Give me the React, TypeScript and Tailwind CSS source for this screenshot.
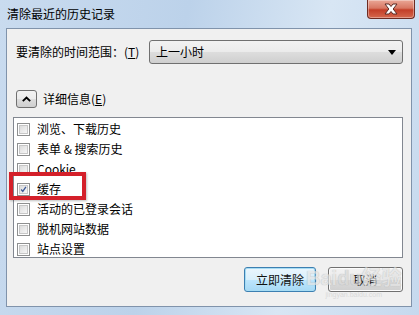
import React from "react";

const FONT = { fontFamily: '"Noto Sans CJK SC", "Noto Sans", sans-serif' };

const ITEMS = [
  { label: "浏览、下载历史", checked: false },
  { label: "表单 & 搜索历史", checked: false },
  { label: "Cookie", checked: false },
  { label: "缓存", checked: true },
  { label: "活动的已登录会话", checked: false },
  { label: "脱机网站数据", checked: false },
  { label: "站点设置", checked: false },
];

function CheckBox({ checked }: { checked: boolean }) {
  return (
    <div className="w-[13px] h-[13px] border border-[#8e8f8f] bg-white p-[1px] shrink-0">
      <div className="w-full h-full bg-[linear-gradient(135deg,#dcdcdc,#f6f6f6)] border border-[#c7c7c7] flex items-center justify-center">
        {checked && (
          <svg width="9" height="9" viewBox="0 0 9 9">
            <path d="M1.5 4.5 L3.6 7 L7.6 1.2" fill="none" stroke="#3d5a98" strokeWidth="1.7" />
          </svg>
        )}
      </div>
    </div>
  );
}

function WinButton({ label, focused }: { label: string; focused?: boolean }) {
  return (
    <div
      className={`h-[25px] rounded-[3px] border flex items-center justify-center text-[12px] text-[#111] ${
        focused
          ? "w-[72px] border-[#3c7fb1] shadow-[inset_0_0_0_1px_#a6dcf4] bg-[linear-gradient(#eaf6fd_0%,#d9f0fc_50%,#bee6fd_51%,#a7d9f5_100%)]"
          : "w-[75px] border-[#707070] shadow-[inset_0_0_0_1px_#fcfcfc] bg-[linear-gradient(#f2f2f2_0%,#ebebeb_50%,#dddddd_51%,#cfcfcf_100%)]"
      }`}
    >
      {label}
    </div>
  );
}

export default function App() {
  return (
    <div
      className="relative w-[419px] h-[315px] overflow-hidden bg-[linear-gradient(100deg,#c9dbef_0%,#bcd2ea_40%,#d8e6f4_70%,#c6d9ee_100%)] flex flex-col"
      style={FONT}
    >
      {/* Title bar */}
      <div className="h-[28px] flex items-center pl-[7px] shrink-0">
        <span className="text-[12px] text-black">清除最近的历史记录</span>
      </div>

      {/* Close button */}
      <div className="absolute left-[367px] top-0 w-[48px] h-[19px] rounded-b-[4px] border border-t-0 border-[#6d2b22] bg-[linear-gradient(#eaa797_0%,#d87763_45%,#c33e28_55%,#d5684d_100%)] shadow-[inset_0_0_0_1px_rgba(255,255,255,0.35)] flex items-center justify-center">
        <svg width="16" height="12" viewBox="0 0 16 12">
          <path
            d="M2 1 H6 L8 3.5 L10 1 H14 L10.2 6 L14 11 H10 L8 8.5 L6 11 H2 L5.8 6 Z"
            fill="#fff"
            stroke="#5a2a24"
            strokeWidth="1"
          />
        </svg>
      </div>

      {/* Client area */}
      <div className="ml-[6px] w-[406px] h-[279px] border border-[#8093ab] bg-[#f0f0f0] flex flex-col text-[12px] text-black">
        <div className="mt-[11px] ml-[9px] flex items-center h-[24px]">
          <span className="w-[133px]">要清除的时间范围：(<span className="underline">T</span>)</span>
          <div className="w-[254px] h-[24px] rounded-[3px] border border-[#707070] bg-[linear-gradient(#f2f2f2_0%,#ebebeb_50%,#dddddd_51%,#cfcfcf_100%)] flex items-center pl-[6px] pr-[6px]">
            <span className="flex-1">上一小时</span>
            <svg width="8" height="5" viewBox="0 0 8 5">
              <path d="M0 0 H8 L4 5 Z" fill="#000" />
            </svg>
          </div>
        </div>

        <div className="mt-[26px] ml-[9px] flex items-center h-[18px]">
          <div className="w-[21px] h-[18px] rounded-[3px] border border-[#707070] bg-[linear-gradient(#f2f2f2_0%,#ebebeb_50%,#dddddd_51%,#cfcfcf_100%)] flex items-center justify-center">
            <svg width="9" height="6" viewBox="0 0 9 6">
              <path d="M0.8 5.2 L4.5 1.5 L8.2 5.2" fill="none" stroke="#000" strokeWidth="1.8" />
            </svg>
          </div>
          <span className="ml-[6px]">详细信息(<span className="underline">E</span>)</span>
        </div>

        <div className="mt-[9px] ml-[6px] w-[390px] h-[141px] border border-[#828790] bg-white pt-[1px]">
          {ITEMS.map((it) => (
            <div key={it.label} className="h-[20px] flex items-center pl-[3px]">
              <CheckBox checked={it.checked} />
              <span className="ml-[7px] text-[12px] text-black">{it.label}</span>
            </div>
          ))}
        </div>

        <div className="mt-[9px] flex justify-end gap-[12px] pr-[8px]">
          <WinButton label="立即清除" focused />
          <WinButton label="取消" />
        </div>
      </div>

      {/* Highlight box */}
      <div className="absolute left-[9px] top-[172px] w-[77px] h-[28px] border-[4px] border-[#d4202a] shadow-[1px_1px_2px_rgba(0,0,0,0.25)]" />

      {/* Watermark */}
      <div className="absolute left-[306px] top-[268px] flex flex-col items-center pointer-events-none opacity-70">
        <span className="text-[20px] font-bold leading-none text-[#e4e4e4] [text-shadow:0_0_1px_#9a9a9a]" style={{ fontFamily: '"Liberation Sans", "Noto Sans CJK SC", sans-serif' }}>
          Bai<span className="text-[#d8d8d8]">du</span>经验
        </span>
        <span className="text-[7px] leading-none mt-[3px] text-[#d0d0d0]" style={{ fontFamily: '"Liberation Sans", sans-serif' }}>
          jingyan.baidu.com
        </span>
      </div>
    </div>
  );
}
